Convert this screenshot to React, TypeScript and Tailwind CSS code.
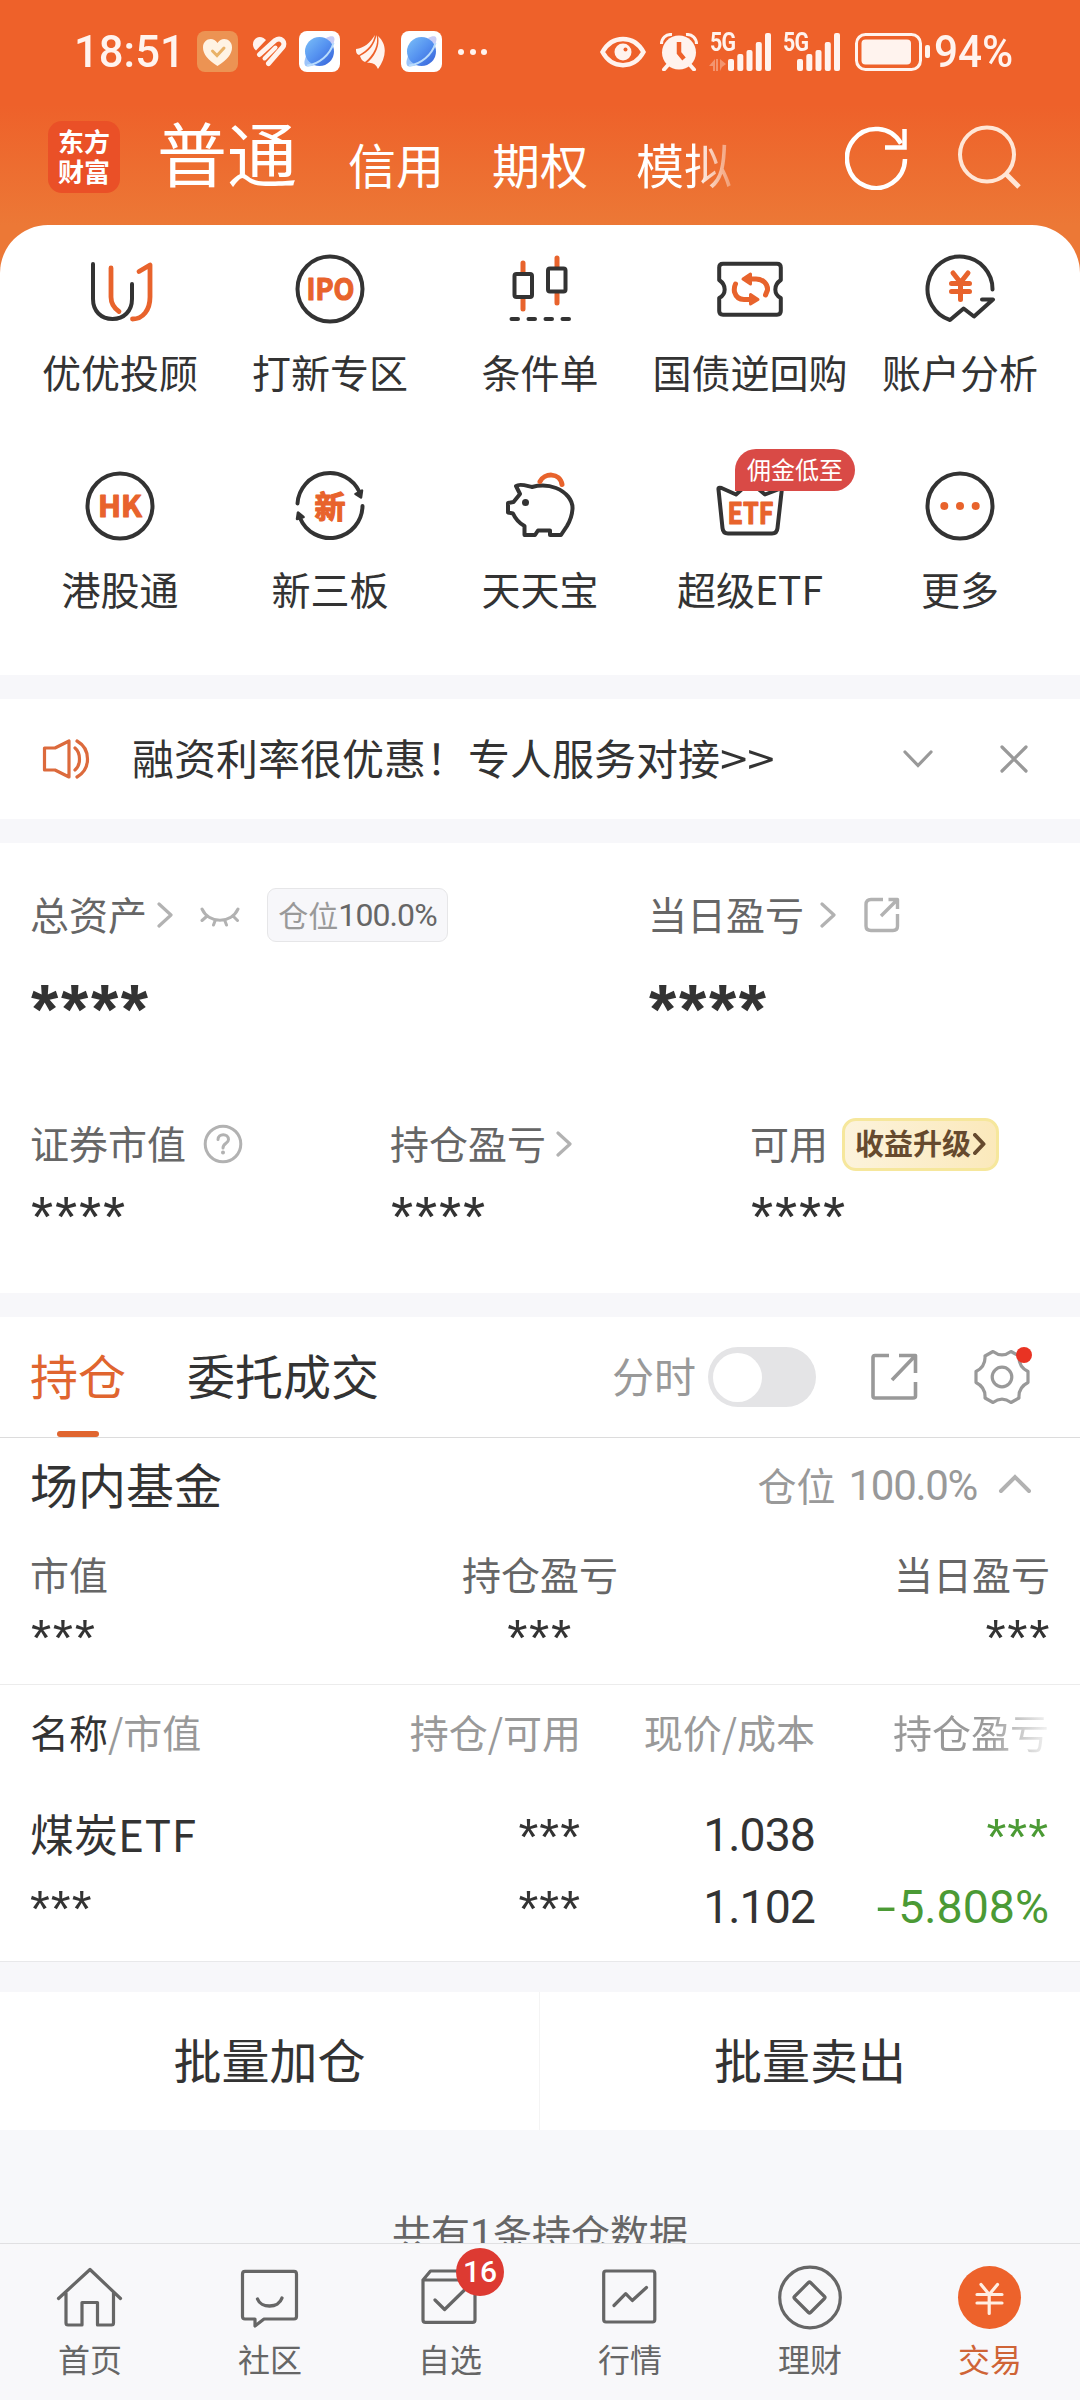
import type { ReactNode } from 'react';

const ORANGE = '#e8632c';
const DARK = '#333333';

/* ---------- status bar ---------- */

function PlanetIcon({ id }: { id: string }) {
  return (
    <svg width="41" height="41" viewBox="0 0 41 41">
      <defs>
        <linearGradient id={id} x1="0" y1="0" x2="1" y2="1">
          <stop offset="0" stopColor="#7cc0f8" />
          <stop offset="0.5" stopColor="#5592f0" />
          <stop offset="1" stopColor="#3560d8" />
        </linearGradient>
      </defs>
      <rect width="41" height="41" rx="8" fill="#fff" />
      <path d="M27 7C33 4 37 5 35 11C34 15 33 17 31 20Z" fill="#c9cdf6" />
      <path d="M8 23C4 31 5 36 9 35.500C14 35 17 34 20 32Z" fill="#9cc4fa" />
      <circle cx="20.500" cy="20.500" r="14.500" fill={`url(#${id})`} />
      <path d="M8 34.500C20 33 31 24 34.500 12" fill="none" stroke="#b9dcfc" strokeWidth="2" />
    </svg>
  );
}

function SignalBars() {
  return (
    <svg width="44" height="38" viewBox="0 0 44 38" fill="#fff3ee">
      <rect x="0" y="26" width="6" height="12" rx="2" />
      <rect x="9.300" y="21" width="6" height="17" rx="2" />
      <rect x="18.500" y="17" width="6" height="21" rx="2" />
      <rect x="27.800" y="9" width="6" height="29" rx="2" />
      <rect x="37" y="0" width="6" height="38" rx="2" />
    </svg>
  );
}

function StatusBar() {
  return (
    <div className="flex h-[103px] items-center pl-[74px] text-[#fff3ee]">
      <span className="w-[123px] origin-left [transform:scaleX(0.97)] font-[Roboto,sans-serif] text-[45px] leading-none font-medium">18:51</span>
      <svg width="41" height="41" viewBox="0 0 41 41">
        <rect width="41" height="41" rx="8" fill="#ec9353" />
        <path d="M20.500 35C11 29 6 23 6 16.500C6 8 16 5 20.500 12C25 5 35 8 35 16.500C35 23 30 29 20.500 35Z" fill="#fff3e4" />
        <path d="M15.500 20L20 24.500L27 17" fill="none" stroke="#e9b268" strokeWidth="3" strokeLinecap="round" />
      </svg>
      <svg className="ml-[13px]" width="36" height="32" viewBox="0 0 36 32" fill="none" stroke="#fff3ee" strokeLinecap="round">
        <path d="M4 13.500C-1.500 7 5-2 12.500 2L15 4L5 14.500Z" fill="#fff3ee" stroke="none" />
        <path d="M8.500 18.500L24 4.500C30 0.500 35.500 6.500 31.500 11.500L17.500 27.500" strokeWidth="5" />
        <path d="M13.500 22.500L24.500 11.500" strokeWidth="4" />
      </svg>
      <div className="ml-[12px]"><PlanetIcon id="planet-a" /></div>
      <svg className="ml-[16px]" width="30" height="34" viewBox="0 0 30 34" fill="#fff3ee">
        <path d="M0 14C8 13 14 8 19 0C17 9 12 15 3 20C0 19 0 16 0 14Z" />
        <path d="M4 21C13 17 19 9 20.500 0C23 9 18 20 9 27C6 26 5 24 4 21Z" />
        <path d="M11 28C20 20 24 10 22 1C32 10 30 23 22 34C20 29 16 27 11 28Z" />
      </svg>
      <div className="ml-[15px]"><PlanetIcon id="planet-b" /></div>
      <div className="ml-[16px] flex gap-[5.500px]">
        <i className="size-[6px] rounded-full bg-[#fff3ee]" />
        <i className="size-[6px] rounded-full bg-[#fff3ee]" />
        <i className="size-[6px] rounded-full bg-[#fff3ee]" />
      </div>
      <svg className="ml-[113px]" width="46" height="32" viewBox="0 0 46 32">
        <path d="M2.500 16C12-1.500 34-1.500 43.500 16C34 33.500 12 33.500 2.500 16Z" fill="none" stroke="#fff3ee" strokeWidth="4.500" />
        <circle cx="23" cy="16" r="8.500" fill="#fff3ee" />
        <circle cx="25.500" cy="13.500" r="2" fill="#ee612a" />
      </svg>
      <svg className="ml-[14px]" width="38" height="38" viewBox="0 0 38 38">
        <path d="M1.500 11C1.500 5 6 1 12 1.500M36.500 11C36.500 5 32 1 26 1.500" fill="none" stroke="#fff3ee" strokeWidth="3" />
        <path d="M8 32L4 36.500M30 32L34 36.500" stroke="#fff3ee" strokeWidth="4" strokeLinecap="round" />
        <circle cx="19" cy="19.500" r="17" fill="#fff3ee" />
        <path d="M19 9V20L24 26" fill="none" stroke="#ee612a" strokeWidth="4.500" />
      </svg>
      <div className="relative ml-[30px] h-[38px]">
        <span className="absolute -top-[4px] -left-[18px] origin-left [transform:scaleX(0.82)] font-[Roboto,sans-serif] text-[26px] leading-none font-bold tracking-[-1px]">5G</span>
        <SignalBars />
        <svg className="absolute bottom-0 -left-[19px]" width="17" height="12" viewBox="0 0 17 12" fill="#fff3ee" opacity="0.35">
          <path d="M0 7L6 0V12H4V7ZM9 0V12H7V0ZM11 12V0L17 5L13 8Z" />
        </svg>
      </div>
      <div className="relative ml-[25px] h-[38px]">
        <span className="absolute -top-[4px] -left-[14px] origin-left [transform:scaleX(0.82)] font-[Roboto,sans-serif] text-[26px] leading-none font-bold tracking-[-1px]">5G</span>
        <SignalBars />
      </div>
      <svg className="ml-[14px]" width="76" height="38" viewBox="0 0 76 38">
        <rect x="1.500" y="1.500" width="64" height="35" rx="9" fill="none" stroke="#fff3ee" strokeWidth="3" />
        <rect x="6.500" y="6.500" width="49.500" height="25" rx="4" fill="#fff3ee" />
        <rect x="70" y="12" width="5" height="13" rx="2" fill="#fff3ee" />
      </svg>
      <span className="ml-[3px] origin-left [transform:scaleX(0.94)] font-[Roboto,sans-serif] text-[45px] leading-none font-medium">94%</span>
    </div>
  );
}

/* ---------- header ---------- */

function Header() {
  return (
    <header className="flex h-[122px] pl-[48px] text-white">
      <div className="mt-[18px] flex size-[72px] flex-col items-center rounded-[14px] bg-[#ea5027] pt-[5px] text-[26px] leading-[30px] font-bold">
        <span>东方</span>
        <span>财富</span>
      </div>
      <div className="ml-[37px] flex w-[575px] items-baseline leading-[98px] whitespace-nowrap">
        <span className="text-[70px]">普通</span>
        <span className="ml-[51px] translate-y-[2px] text-[48px]">信用</span>
        <span className="ml-[48px] translate-y-[2px] text-[48px]">期权</span>
        <span className="ml-[48px] translate-y-[2px] bg-linear-to-r from-white from-60% to-white/30 bg-clip-text text-[48px] text-transparent">模拟</span>
      </div>
      <svg className="mt-[23px] ml-[113px]" width="64" height="64" viewBox="0 0 64 64" fill="none" stroke="#fff" strokeWidth="4.500">
        <path d="M60 33A29 29.500 0 1 1 56 17.500" />
        <path d="M59.500 3V21.500H40" />
      </svg>
      <svg className="mt-[21px] ml-[48px]" width="66" height="66" viewBox="0 0 66 66" fill="none" stroke="#ffe6d6" strokeWidth="4">
        <circle cx="30" cy="30.500" r="27" />
        <path d="M48.500 49.500L62 63" strokeWidth="5" />
      </svg>
    </header>
  );
}

/* ---------- shortcut grid ---------- */

function GridIcon({ children }: { children: ReactNode }) {
  return (
    <svg width="80" height="80" viewBox="0 0 80 80" fill="none" stroke={DARK} strokeWidth="4" strokeLinecap="round" strokeLinejoin="round">
      {children}
    </svg>
  );
}

function IconWord({ text, x, y, size, width }: { text: string; x: number; y: number; size: number; width: number }) {
  return (
    <text
      x={x}
      y={y}
      fontSize={size}
      fontWeight="700"
      textLength={width}
      lengthAdjust="spacingAndGlyphs"
      fill={ORANGE}
      stroke={ORANGE}
      strokeWidth="1.200"
    >
      {text}
    </text>
  );
}

const shortcuts: { label: string; icon: ReactNode; tag?: string }[] = [
  {
    label: '优优投顾',
    icon: (
      <>
        <path d="M13 15V50C13 62 21 70 32.500 70S52 62 52 50V35" />
        <path d="M31 19V48C31 55 34 59 39 62.500M59 22.500L70 16V48C70 61 63 70 52.500 70" stroke={ORANGE} strokeWidth="4.800" />
      </>
    ),
  },
  {
    label: '打新专区',
    icon: (
      <>
        <circle cx="40" cy="40" r="32.500" />
        <IconWord text="IPO" x={16.5} y={51} size={30} width={48} />
      </>
    ),
  },
  {
    label: '条件单',
    icon: (
      <>
        <path d="M23 14V23M23 50V60M57 9V18M57 45V54" stroke={ORANGE} strokeWidth="5" />
        <rect x="14.500" y="25" width="17.500" height="23" rx="2" />
        <rect x="48" y="19.500" width="17.500" height="23" rx="2" />
        <path d="M11.500 70H18M28.500 70H35M45.500 70H52M62.500 70H69" />
      </>
    ),
  },
  {
    label: '国债逆回购',
    icon: (
      <>
        <path d="M13 14.700H67Q70.800 14.700 70.800 18.500V31C63.500 36 63.500 45 70.800 49V62Q70.800 65.700 67 65.700H13Q9.200 65.700 9.200 62V49C16.500 45 16.500 36 9.200 31V18.500Q9.200 14.700 13 14.700Z" />
        <g stroke={ORANGE} strokeWidth="5">
          <path d="M40 30H46C53 30 58 35 57.500 41L55.500 46M25.500 35C24 38 24 40 24.500 43C26 48 29 50.500 34 50.500H41" />
          <path d="M33 30L40.500 25V35ZM48 50.500L40.500 45.500V55Z" fill={ORANGE} strokeWidth="3" />
        </g>
      </>
    ),
  },
  {
    label: '账户分析',
    icon: (
      <>
        <path d="M72.500 40.500A32.500 32.500 0 1 0 30 71L43.600 59.500L54 67.500L73 50.500H62" />
        <path d="M33 24L40.500 33.500L48 24M40.500 34V50.500M31.500 34.500H49.500M31.500 42.500H49.500" stroke={ORANGE} strokeWidth="5" />
      </>
    ),
  },
  {
    label: '港股通',
    icon: (
      <>
        <circle cx="40" cy="40" r="32.500" />
        <IconWord text="HK" x={18} y={51} size={30} width={44} />
      </>
    ),
  },
  {
    label: '新三板',
    icon: (
      <>
        <path d="M7.500 37.500A32.500 32.500 0 0 1 69.500 26M72.500 40A32.500 32.500 0 0 1 10 52" />
        <path d="M65.500 28L72 24.500L71 31.500ZM8 46.500L7 53L13.500 51Z" fill={DARK} strokeWidth="2.500" />
        <IconWord text="新" x={24.5} y={51.5} size={31} width={31} />
      </>
    ),
  },
  {
    label: '天天宝',
    icon: (
      <>
        <path d="M16 20C20 17 27 20 32 21C40 19 48 19 56 22C66 26 73 34 72.500 43C72 50 70 55 67 60L61 69H50V64.500H38L35 69H24.500V60C19 57 15 52 13 47.500L8 46.500V37L13.500 36L20 28Z" />
        <circle cx="25.500" cy="36.500" r="3.500" fill={DARK} stroke="none" />
        <path d="M40 15.500C44 7 60 6 62 18.500" stroke={ORANGE} strokeWidth="5" />
      </>
    ),
  },
  {
    label: '超级ETF',
    tag: '佣金低至',
    icon: (
      <>
        <path d="M8.500 23.500L12.500 62Q13 67.500 18 67.500H62Q67 67.500 67.500 62L72 22L55 28.500L40 16L26 28.500L11.500 22Q8 21 8.500 23.500Z" />
        <IconWord text="ETF" x={17.5} y={57.5} size={30} width={46} />
      </>
    ),
  },
  {
    label: '更多',
    icon: (
      <>
        <circle cx="40" cy="40" r="32.500" />
        <g fill={ORANGE} stroke="none">
          <circle cx="24.300" cy="40" r="4" />
          <circle cx="40" cy="40" r="4" />
          <circle cx="55.700" cy="40" r="4" />
        </g>
      </>
    ),
  },
];

function ShortcutGrid() {
  return (
    <section className="grid h-[450px] auto-rows-[217px] grid-cols-5 rounded-t-[48px] bg-white px-[15px] pt-[24px]">
      {shortcuts.map((s) => (
        <div key={s.label} className="relative flex flex-col items-center">
          <GridIcon>{s.icon}</GridIcon>
          <span className="mt-[22px] text-[39px] leading-[40px] whitespace-nowrap text-[#333]">{s.label}</span>
          {s.tag && (
            <span className="absolute -top-[17px] left-[90px] flex h-[42px] w-[120px] items-center justify-center rounded-[21px] rounded-bl-none bg-[#d94a46] pb-[2px] text-[24px] leading-none text-white">
              {s.tag}
            </span>
          )}
        </div>
      ))}
    </section>
  );
}

/* ---------- shared bits ---------- */

function Band({ className = 'h-[24px]' }: { className?: string }) {
  return <div className={`shrink-0 bg-[#f7f7fa] ${className}`} />;
}

function ChevronRight({ className = '' }: { className?: string }) {
  return (
    <svg className={className} width="16" height="26" viewBox="0 0 16 26" fill="none" stroke="#b2b2b2" strokeWidth="3.200" strokeLinecap="round" strokeLinejoin="round">
      <path d="M2 2L14 13L2 24" />
    </svg>
  );
}

function Stars({ count, className }: { count: number; className: string }) {
  return <span className={`block font-['Liberation_Sans',sans-serif] ${className}`}>{'*'.repeat(count)}</span>;
}

function Notice() {
  return (
    <section className="flex h-[120px] items-center bg-white pl-[42px]">
      <svg width="49" height="40" viewBox="0 0 49 40" fill="none" stroke="#dc6a3c" strokeWidth="3.200" strokeLinecap="round" strokeLinejoin="round">
        <path d="M2.500 9H13L27 2V38L13 31H2.500Z" />
        <path d="M33 9C39 14 39 26 33 31M35 2C49 10 49 30 35 38" />
      </svg>
      <span className="mt-[-4px] ml-[41px] w-[771px] text-[42px] leading-none whitespace-nowrap text-[#333]">
        融资利率很优惠！专人服务对接<span className="inline-block origin-left [transform:scaleX(1.17)]">&gt;&gt;</span>
      </span>
      <svg width="30" height="18" viewBox="0 0 30 18" fill="none" stroke="#999" strokeWidth="3.200" strokeLinecap="round">
        <path d="M2 2L15 15.500L28 2" />
      </svg>
      <svg className="ml-[67px]" width="28" height="28" viewBox="0 0 28 28" fill="none" stroke="#999" strokeWidth="3.200" strokeLinecap="round">
        <path d="M2 2L26 26M26 2L2 26" />
      </svg>
    </section>
  );
}

/* ---------- assets ---------- */

function Assets() {
  return (
    <section className="h-[450px] bg-white text-[39px] leading-none text-[#666]">
      <div className="flex h-[144px] pl-[30px]">
        <div className="flex w-[618px] items-center">
          <span className="mt-[-4px]">总资产</span>
          <ChevronRight className="ml-[10px]" />
          <svg className="mt-[3px] ml-[27px]" width="40" height="20" viewBox="0 0 40 20" fill="none" stroke="#b2b2b2" strokeWidth="3" strokeLinecap="round">
            <path d="M2 2C9 17 31 17 38 2M6 10L2 13.500M15 14L13.500 18M25 14L26.500 18M34 10L37.500 13.500" />
          </svg>
          <span className="ml-[27px] flex h-[54px] w-[181px] items-center justify-center rounded-[9px] border border-[#e6e6e8] bg-[#f7f7fa] pb-[2px] text-[30px] text-[#999]">
            仓位<span className="mt-[2px] font-[Roboto,sans-serif] text-[32px] tracking-[-0.900px] text-[#666]">100.0%</span>
          </span>
        </div>
        <div className="flex items-center">
          <span className="mt-[-4px]">当日盈亏</span>
          <ChevronRight className="ml-[16px]" />
          <svg className="ml-[28px]" width="36" height="36" viewBox="0 0 36 36" fill="none" stroke="#b2b2b2" strokeWidth="3.400" strokeLinejoin="round">
            <path d="M19 2.500H7Q2 2.500 2 7.500V29Q2 33.500 7 33.500H29Q33.500 33.500 33.500 29V17M24.500 2.500H33.500V12M33.500 2.500L17 19" />
          </svg>
        </div>
      </div>
      <div className="flex h-[72px] pl-[31px] text-[#333]">
        <Stars count={4} className="w-[618px] text-[70px] leading-[47px] font-bold tracking-[2.700px]" />
        <Stars count={4} className="text-[70px] leading-[47px] font-bold tracking-[2.700px]" />
      </div>
      <div className="mt-[58px] grid h-[54px] grid-cols-[360px_360px_330px] items-center pl-[30px]">
        <div className="flex items-center">
          <span className="mt-[-4px]">证券市值</span>
          <svg className="ml-[17px]" width="40" height="40" viewBox="0 0 40 40" fill="none" stroke="#b2b2b2" strokeWidth="3" strokeLinecap="round">
            <circle cx="20" cy="20" r="17.800" />
            <path d="M15 15.500C15 9 25.500 9 25.500 15.500C25.500 19.500 20 19 20 24" />
            <circle cx="20" cy="28.500" r="1" fill="#b2b2b2" strokeWidth="2" />
          </svg>
        </div>
        <div className="flex items-center">
          <span className="mt-[-4px]">持仓盈亏</span>
          <ChevronRight className="ml-[10px]" />
        </div>
        <div className="flex items-center">
          <span className="mt-[-4px]">可用</span>
          <span className="ml-[14px] flex h-[53px] w-[157px] items-center rounded-[14px] border-[3px] border-[#f6e79c] bg-linear-to-r from-[#fcf3dc] to-[#fbe9bb] pl-[10px] text-[29px] font-bold text-[#664a2e]">
            <span className="mt-[-3px]">收益升级</span>
            <svg className="ml-[2px]" width="13" height="22" viewBox="0 0 13 22" fill="none" stroke="#664a2e" strokeWidth="4" strokeLinecap="round" strokeLinejoin="round">
              <path d="M2 2L10.500 11L2 20" />
            </svg>
          </span>
        </div>
      </div>
      <div className="mt-[21px] grid grid-cols-[360px_360px_330px] pl-[31px] text-[57px] leading-[50px] tracking-[1.800px] text-[#333]">
        <Stars count={4} className="" />
        <Stars count={4} className="" />
        <Stars count={4} className="" />
      </div>
    </section>
  );
}

/* ---------- positions ---------- */

function PositionTabs() {
  return (
    <div className="flex h-[121px] items-center border-b border-[#dcdcdc] bg-white pl-[30px] text-[48px] leading-none">
      <div className="relative flex h-[120px] items-center text-[#e0652f]">
        <span className="mt-[-7px]">持仓</span>
        <i className="absolute bottom-0 left-[27px] h-[6px] w-[42px] rounded-[3px] bg-[#e0652f]" />
      </div>
      <span className="mt-[-7px] ml-[61px] text-[#333]">委托成交</span>
      <span className="mt-[-5px] ml-[233px] text-[42px] text-[#999]">分时</span>
      <div className="ml-[12px] flex h-[60px] w-[108px] items-center rounded-full bg-[#e4e4e6] pl-[5px]">
        <i className="size-[49px] rounded-full bg-white" />
      </div>
      <svg className="ml-[54px]" width="48" height="48" viewBox="0 0 48 48" fill="none" stroke="#999" strokeWidth="3.600" strokeLinejoin="round">
        <path d="M19 2.500H5Q3 2.500 3 4.500V43Q3 45 5 45H43Q45.500 45 45.500 43V29M29 2.500H45.500V20M45 3L22 27" />
      </svg>
      <div className="relative ml-[56px] h-[56px] w-[56px]">
        <svg width="56" height="56" viewBox="0 0 56 56" fill="none" stroke="#999" strokeWidth="3.200" strokeLinejoin="round">
          <path d="M19 2.500C25 7 31 7 37 2.500L45 7C44.500 14 47 19 54 22.500V33.500C47 37 44.500 42 45 49L37 53.500C31 49 25 49 19 53.500L11 49C11.500 42 9 37 2 33.500V22.500C9 19 11.500 14 11 7Z" />
          <circle cx="28" cy="28" r="9.800" />
        </svg>
        <i className="absolute -top-[2px] left-[42px] size-[16px] rounded-full bg-[#e93323]" />
      </div>
    </div>
  );
}

function FundSummary() {
  return (
    <section className="h-[247px] border-b border-[#ececec] bg-white px-[30px] leading-none">
      <div className="flex h-[92px] items-center">
        <span className="mt-[-2px] text-[48px] text-[#333]">场内基金</span>
        <span className="ml-auto flex items-center text-[39px] text-[#999]">
          仓位<span className="mt-[4px] ml-[13px] font-[Roboto,sans-serif] text-[42px] tracking-[-1.300px]">100.0%</span>
        </span>
        <svg className="mr-[18px] ml-[21px]" width="34" height="20" viewBox="0 0 34 20" fill="none" stroke="#b2b2b2" strokeWidth="4" strokeLinecap="round">
          <path d="M3 17L17 3L31 17" />
        </svg>
      </div>
      <div className="mt-[24px] grid grid-cols-3 text-[39px] text-[#666]">
        <span>市值</span>
        <span className="text-center">持仓盈亏</span>
        <span className="text-right">当日盈亏</span>
      </div>
      <div className="mt-[20px] grid grid-cols-3 px-px text-[52px] leading-[50px] tracking-[1.600px] text-[#333]">
        <Stars count={3} className="" />
        <Stars count={3} className="text-center" />
        <Stars count={3} className="-mr-[2px] text-right" />
      </div>
    </section>
  );
}

const tableCols = 'grid grid-cols-[261px_290px_234px_234px] pl-[30px] [&>*:not(:first-child)]:text-right';
const cellStars = 'text-[51px] tracking-[1px]';
const cellNumber = "font-[Roboto,sans-serif] text-[46.5px] tracking-[-1px]";

function HoldingsTable() {
  return (
    <section className="h-[277px] border-b border-[#e8e8ea] bg-white leading-none">
      <div className={`${tableCols} pt-[27px] text-[39px] text-[#999]`}>
        <span className="whitespace-nowrap"><span className="text-[#333]">名称</span>/市值</span>
        <span>持仓/可用</span>
        <span>现价/成本</span>
        <span><span className="bg-linear-to-r from-[#999] from-60% to-[#f4f4f4] bg-clip-text text-transparent">持仓盈亏</span></span>
      </div>
      <div className={`${tableCols} mt-[58px] h-[72px] text-[#333]`}>
        <span className="text-[44px] leading-[48px]">煤炭<span className="tracking-[0.800px]">ETF</span></span>
        <Stars count={3} className={`${cellStars} leading-[57px]`} />
        <span className={`${cellNumber} leading-[53px]`}>1.038</span>
        <Stars count={3} className={`${cellStars} leading-[57px] text-[#4b9a35]`} />
      </div>
      <div className={`${tableCols} text-[#333]`}>
        <Stars count={3} className={`${cellStars} leading-[57px]`} />
        <Stars count={3} className={`${cellStars} leading-[57px]`} />
        <span className={`${cellNumber} leading-[53px]`}>1.102</span>
        <span className="font-[Roboto,sans-serif] text-[46.5px] leading-[53px] text-[#4b9a35]">
          <span className="mr-[2px] inline-block origin-right [transform:scaleX(1.5)]">-</span>5.808%
        </span>
      </div>
    </section>
  );
}

function BatchActions() {
  return (
    <div className="grid h-[138px] shrink-0 grid-cols-2 bg-white text-[48px] leading-none text-[#333]">
      <div className="flex items-center justify-center border-r border-[#f4f4f4] pb-[7px]">批量加仓</div>
      <div className="flex items-center justify-center pb-[7px]">批量卖出</div>
    </div>
  );
}

/* ---------- bottom navigation ---------- */

const navItems: { label: string; icon: ReactNode; badge?: string; active?: boolean }[] = [
  {
    label: '首页',
    icon: <path d="M8.500 41.500L40 12.500L70.500 41.500M16 36V66Q16 68 18 68H32V45.500H47.500V68H61.500Q63.500 68 63.500 66V36" />,
  },
  {
    label: '社区',
    icon: (
      <>
        <path d="M15 14.300H64Q66.500 14.300 66.500 17V59.500Q66.500 62 64 62H34L25 69V62H15Q12.500 62 12.500 59.500V17Q12.500 14.300 15 14.300Z" />
        <path d="M27.500 42C31 51.500 48.500 51.500 52 41" strokeWidth="3.400" />
      </>
    ),
  },
  {
    label: '自选',
    badge: '16',
    icon: <path d="M13 23L20.500 14H57.500L65 23M13 23H65V63Q65 65.300 62.500 65.300H15.500Q13 65.300 13 63ZM25 43L34.600 52.500L54.500 33" />,
  },
  {
    label: '行情',
    icon: <path d="M16 14H62.500Q64.800 14 64.800 16.500V62.500Q64.800 65 62.500 65H16Q13.700 65 13.700 62.500V16.500Q13.700 14 16 14ZM24 48.500L35.700 36.700L42.300 43.500L56.500 30.500" />,
  },
  {
    label: '理财',
    icon: (
      <>
        <circle cx="40" cy="40.500" r="30.300" />
        <path d="M38.500 25.500Q39.500 24.500 40.500 25.500L54.500 39.500Q55.500 40.500 54.500 41.500L40.500 55.500Q39.500 56.500 38.500 55.500L24.500 41.500Q23.500 40.500 24.500 39.500Z" />
      </>
    ),
  },
  {
    label: '交易',
    active: true,
    icon: (
      <>
        <circle cx="39.500" cy="40.500" r="31.500" fill="#ed622b" stroke="none" />
        <path d="M31 27.500L39.200 37.500L47.500 27.500M39.200 37.500V56.500M27 37.500H52M27 46H52" stroke="#ffeee2" />
      </>
    ),
  },
];

function BottomNav() {
  return (
    <nav className="grid h-[157px] shrink-0 grid-cols-6 border-t border-[#e0e0e2] bg-[#f8f8fa]">
      {navItems.map((n) => (
        <div key={n.label} className={`relative flex flex-col items-center pt-[13px] ${n.active ? 'text-[#cf6436]' : 'text-[#666]'}`}>
          <svg width="80" height="80" viewBox="0 0 80 80" fill="none" stroke="#666" strokeWidth="3.200" strokeLinejoin="round" strokeLinecap="round">
            {n.icon}
          </svg>
          <span className="mt-[5px] text-[32px] leading-none">{n.label}</span>
          {n.badge && (
            <span className="absolute top-[4px] left-[96px] flex size-[48px] items-center justify-center rounded-full bg-[#dd3a32] font-[Roboto,sans-serif] text-[30px] leading-none font-medium text-white">
              {n.badge}
            </span>
          )}
        </div>
      ))}
    </nav>
  );
}

export default function App() {
  return (
    <div className="flex h-[2400px] w-[1080px] flex-col overflow-hidden bg-[#f7f8fa] font-['Noto_Sans_CJK_SC',sans-serif]">
      <div className="flex min-h-0 flex-1 flex-col overflow-hidden *:shrink-0">
        <div className="bg-[linear-gradient(180deg,#ee612a_0px,#ee612a_105px,#ec7836_225px,#ec7836_300px,#ffffff_300px)]">
          <StatusBar />
          <Header />
          <ShortcutGrid />
        </div>
        <Band />
        <Notice />
        <Band />
        <Assets />
        <Band />
        <PositionTabs />
        <FundSummary />
        <HoldingsTable />
        <Band className="h-[30px]" />
        <BatchActions />
        <p className="pt-[82px] text-center text-[39px] leading-none text-[#666]">
          共有<span className="font-[Roboto,sans-serif] text-[41px]">1</span>条持仓数据
        </p>
      </div>
      <BottomNav />
    </div>
  );
}
